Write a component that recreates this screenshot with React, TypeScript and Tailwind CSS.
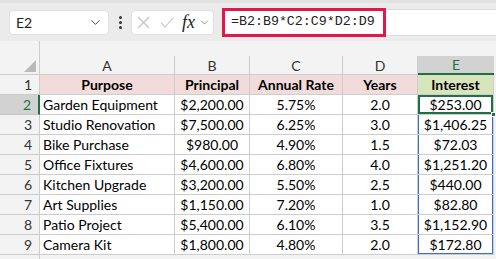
import { ChevronDown } from 'lucide-react';

const COLS = ['A', 'B', 'C', 'D', 'E'];
const WIDTHS = ['w-[135px]', 'w-[75px]', 'w-[93px]', 'w-[75px]', 'w-[76px]'];

const ROWS = [
  ['Garden Equipment', '$2,200.00', '5.75%', '2.0', '$253.00'],
  ['Studio Renovation', '$7,500.00', '6.25%', '3.0', '$1,406.25'],
  ['Bike Purchase', '$980.00', '4.90%', '1.5', '$72.03'],
  ['Office Fixtures', '$4,600.00', '6.80%', '4.0', '$1,251.20'],
  ['Kitchen Upgrade', '$3,200.00', '5.50%', '2.5', '$440.00'],
  ['Art Supplies', '$1,150.00', '7.20%', '1.0', '$82.80'],
  ['Patio Project', '$5,400.00', '6.10%', '3.5', '$1,152.90'],
  ['Camera Kit', '$1,800.00', '4.80%', '2.0', '$172.80'],
];

const HEADERS = ['Purpose', 'Principal', 'Annual Rate', 'Years', 'Interest'];

const GRID = 'border-[#cdcdcd]';

export default function App() {
  return (
    <div className="w-[496px] h-[259px] overflow-hidden bg-[#f3f3f3] font-['Lato',sans-serif] text-black">
      {/* formula toolbar */}
      <div className="h-[41px] bg-[#ebebeb] border-t-[3px] border-[#e2e2e2] flex items-center">
        <div className="ml-[9px] w-[100px] h-[25px] bg-white rounded-[4px] border border-[#e0e0e0] flex items-center justify-between pl-[6px] pr-[5px]">
          <span className="text-[14px] text-[#222]">E2</span>
          <ChevronDown size={15} strokeWidth={1.6} className="text-[#444]" />
        </div>
        <div className="w-[22px] flex flex-col items-center gap-[2px]">
          <span className="w-[3px] h-[3px] rounded-full bg-[#333]" />
          <span className="w-[3px] h-[3px] rounded-full bg-[#333]" />
          <span className="w-[3px] h-[3px] rounded-full bg-[#333]" />
        </div>
        <div className="w-[83px] h-[25px] bg-white rounded-[4px] border border-[#e0e0e0] flex items-center pl-[5px] pr-[2px]">
          <svg width="13" height="13" viewBox="0 0 13 13" fill="none" stroke="#c2c2c2" strokeWidth="1.1">
            <path d="M1 1L12 12M12 1L1 12" />
          </svg>
          <svg width="14" height="11" viewBox="0 0 14 11" fill="none" stroke="#c2c2c2" strokeWidth="1.1" className="ml-[10px]">
            <path d="M1 5.5L5 10L13 1" />
          </svg>
          <span className="ml-[8px] font-['Liberation_Serif',serif] italic text-[18px] leading-none text-[#222]">fx</span>
          <ChevronDown size={13} strokeWidth={1.4} className="text-[#777] ml-[3px]" />
        </div>
        <div className="ml-[8px] flex-1 h-[27px] bg-white border border-r-0 border-[#dcdcdc] flex items-center">
          <div className="-ml-px h-[29px] w-[164px] border-[3px] border-[#e3174b] flex items-center pl-[6px] font-['Liberation_Mono',monospace] text-[13.3px] text-[#222]">
            =B2:B9*C2:C9*D2:D9
          </div>
        </div>
      </div>

      {/* gap above column headers */}
      <div className="h-[15px] flex">
        <div className={`w-[40px] border-r ${GRID}`} />
      </div>

      {/* column headers */}
      <div className="h-[19px] flex">
        <div className={`w-[40px] border-r border-b ${GRID} relative`}>
          <svg width="12" height="12" viewBox="0 0 12 12" className="absolute right-[3px] bottom-[2px]">
            <polygon points="12,0 12,12 0,12" fill="#b9b9b9" />
          </svg>
        </div>
        {COLS.map((c, i) =>
          c === 'E' ? (
            <div key={c} className={`${WIDTHS[i]} bg-[#d2d2d2] border-b-2 border-[#1e7145] flex items-center justify-center text-[14px] text-[#1e7145]`}>
              {c}
            </div>
          ) : (
            <div key={c} className={`${WIDTHS[i]} border-r border-b ${GRID} flex items-center justify-center text-[14px] text-[#333]`}>
              {c}
            </div>
          )
        )}
      </div>

      {/* row 1: headers */}
      <div className="h-[20px] flex">
        <div className={`w-[40px] border-r border-b ${GRID} flex items-center justify-end pr-[7px] text-[14px] text-[#333]`}>1</div>
        {HEADERS.map((h, i) => (
          <div
            key={h}
            className={`${WIDTHS[i]} border-r border-b ${GRID} ${i === 4 ? 'bg-[#d8e4bc]' : 'bg-[#f2dcdb]'} flex items-center justify-center font-bold text-[14px]`}
          >
            {h}
          </div>
        ))}
      </div>

      {/* data rows */}
      {ROWS.map((r, ri) => {
        const n = ri + 2;
        const active = n === 2;
        const last = n === 9;
        return (
          <div key={n} className="h-[20px] flex">
            <div
              className={`w-[40px] flex items-center justify-end pr-[7px] text-[14px] ${
                active
                  ? 'bg-[#d2d2d2] text-[#1e7145] border-r-2 border-b border-r-[#1e7145] border-b-[#c4c4c4]'
                  : `text-[#333] border-r border-b ${GRID}`
              }`}
            >
              {n}
            </div>
            {r.map((v, ci) => {
              const isE = ci === 4;
              let cls = `${WIDTHS[ci]} bg-white border-r border-b ${GRID} flex items-center text-[14px] ${ci === 0 ? 'pl-[3px]' : 'justify-center'}`;
              if (isE && active) cls += ' relative shadow-[inset_0_0_0_2px_#1e7145]';
              else if (isE && last) cls += ' shadow-[inset_1px_0_0_#3a6fd6,inset_-1px_0_0_#3a6fd6,inset_0_-1px_0_#3a6fd6]';
              else if (isE) cls += ' shadow-[inset_1px_0_0_#3a6fd6,inset_-1px_0_0_#3a6fd6]';
              return (
                <div key={ci} className={cls}>
                  {v}
                  {isE && active && (
                    <span className="absolute right-[-3px] bottom-[-3px] w-[5px] h-[5px] bg-[#1e7145] border border-white" />
                  )}
                </div>
              );
            })}
          </div>
        );
      })}

      <div className="h-[8px] flex">
        <div className={`w-[40px] border-r ${GRID}`} />
      </div>
    </div>
  );
}
